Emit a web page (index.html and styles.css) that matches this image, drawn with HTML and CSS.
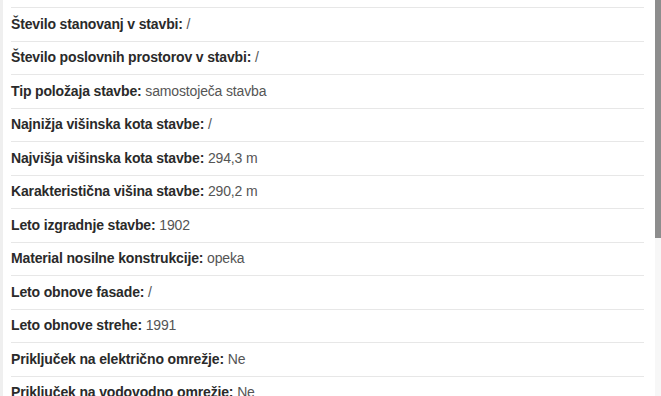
FILE: index.html
```html
<!DOCTYPE html>
<html lang="sl">
<head>
<meta charset="utf-8">
<title>Podatki o stavbi</title>
<link rel="stylesheet" href="styles.css">
</head>
<body>
<div class="page">
  <div class="edge"></div>
  <main class="list">
    <div class="row"><span class="label">Število stanovanj v stavbi:</span> <span class="value">/</span></div>
    <div class="row"><span class="label">Število poslovnih prostorov v stavbi:</span> <span class="value">/</span></div>
    <div class="row"><span class="label">Tip položaja stavbe:</span> <span class="value">samostoječa stavba</span></div>
    <div class="row"><span class="label">Najnižja višinska kota stavbe:</span> <span class="value">/</span></div>
    <div class="row"><span class="label">Najvišja višinska kota stavbe:</span> <span class="value">294,3 m</span></div>
    <div class="row"><span class="label">Karakteristična višina stavbe:</span> <span class="value">290,2 m</span></div>
    <div class="row"><span class="label">Leto izgradnje stavbe:</span> <span class="value">1902</span></div>
    <div class="row"><span class="label">Material nosilne konstrukcije:</span> <span class="value">opeka</span></div>
    <div class="row"><span class="label">Leto obnove fasade:</span> <span class="value">/</span></div>
    <div class="row"><span class="label">Leto obnove strehe:</span> <span class="value">1991</span></div>
    <div class="row"><span class="label">Priključek na električno omrežje:</span> <span class="value">Ne</span></div>
    <div class="row"><span class="label">Priključek na vodovodno omrežje:</span> <span class="value">Ne</span></div>
  </main>
  <div class="scrollbar"><div class="thumb"></div></div>
</div>
</body>
</html>
```
FILE: styles.css
```css
html, body {
  margin: 0;
  padding: 0;
  background: #ffffff;
}

body {
  height: 396px;
  overflow: hidden;
  font-family: "Liberation Sans", Arial, sans-serif;
  font-size: 14px;
  letter-spacing: -0.15px;
}

.page {
  display: flex;
  height: 396px;
}

.edge {
  width: 3px;
  flex: none;
  background: #efefef;
}

.list {
  flex: 1;
  padding: 7px 0 0 8px;
  margin-right: 11px;
  overflow: hidden;
}

.row {
  border-top: 1px solid #e7e7e7;
  padding: 5.5px 0 7px 0;
  line-height: 20px;
  white-space: nowrap;
}

.label {
  font-weight: bold;
  color: #2a2a2a;
}

.value {
  color: #555555;
}

.scrollbar {
  width: 6px;
  flex: none;
  background: #f7f7f7;
}

.thumb {
  height: 238px;
  background: #8d8d8d;
}
```
